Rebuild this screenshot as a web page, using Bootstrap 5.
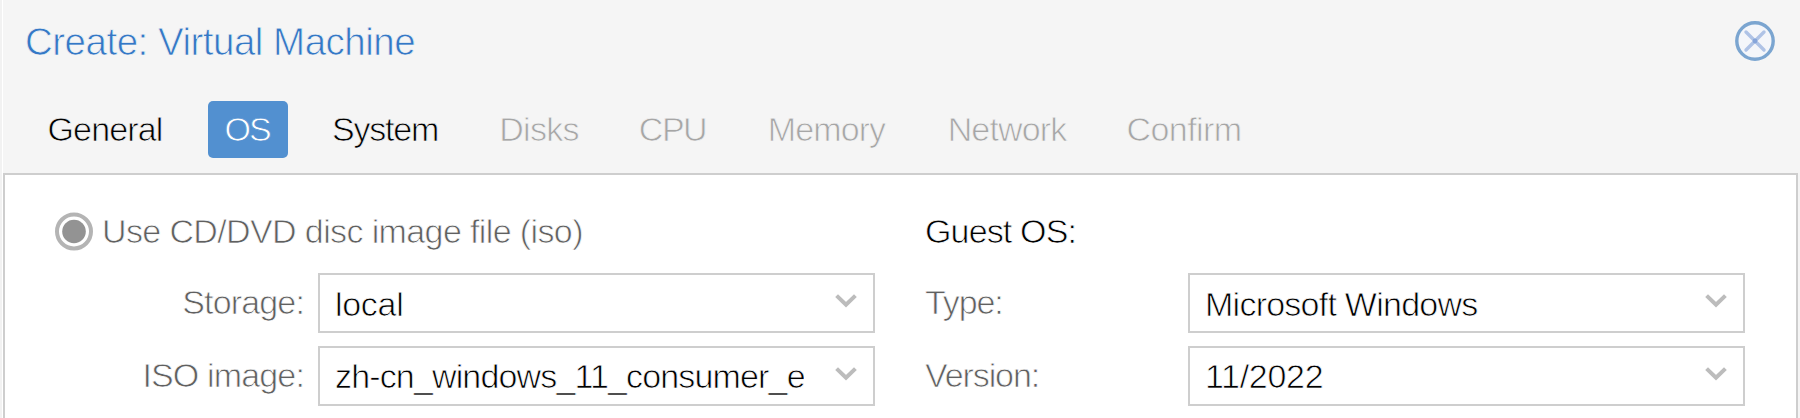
<!DOCTYPE html>
<html lang="en">
<head>
<meta charset="utf-8">
<title>Create: Virtual Machine</title>
<link href="https://cdn.jsdelivr.net/npm/bootstrap@5.3.0/dist/css/bootstrap.min.css" rel="stylesheet">
<style>
body{background:#f5f5f5;font-family:"Liberation Sans",Arial,sans-serif;font-size:34px;line-height:40px;color:#000;height:418px;overflow:hidden;white-space:nowrap;letter-spacing:-.85px}
.wizard{height:418px;border-left:2px solid #f2f2f2;box-shadow:inset 1px 0 #fff}
/* a stroke in the background colour slims the letters to a light weight */
.thin,.thin *{-webkit-text-stroke:.75px var(--behind,#fff)}
.thin svg{-webkit-text-stroke:0}
.wizard-head{height:82px;padding:0 25px 0 23px;--behind:#f5f5f5}
.wizard-title{font-size:38.5px;font-weight:400;line-height:46px;padding-top:2px;color:#3478c6;letter-spacing:-.5px}
.wizard-tabs{gap:26px;padding:19px 0 0 27px;height:91px;--behind:#f5f5f5}
.wizard-tabs .nav-link{height:57px;padding:8px 1px 0 0;text-align:center;color:#000;border-radius:5px}
.wizard-tabs .nav-link.disabled{color:#a6a6a6}
.wizard-tabs .nav-link.active{background:#5290d0;color:#fff;--behind:#5290d0}
.t1{width:153px}
.wizard-tabs .t2{width:80px;letter-spacing:-2px;padding-right:2px}
.t3{width:143px;letter-spacing:-1.2px}
.t4{width:113px;letter-spacing:-.7px}
.t5{width:102px;letter-spacing:-1.5px}
.t6{width:154px;letter-spacing:-.9px}
.t7{width:155px}
.t8{width:147px;letter-spacing:-.6px}
.pane{border:2px solid #cecece;border-bottom:0;background:#fff;height:245px;margin:0 2px 0 1px;padding:36px 51px 0 50px}
.lbl{color:#606060}
.left-side{width:820px}
.right-side{width:820px}
.line-top{height:62px}
.radio-text{margin-left:9px;letter-spacing:-.62px}
.combo{width:557px;height:60px;border:2px solid #cecece}
.line-field{height:73px}
.line-field .lbl{padding-top:9px}
.left-side .lbl-field{width:263px;padding-right:14px;text-align:right}
.right-side .lbl-field{width:263px}
.combo-value{margin:9px 0 0 15px;width:469px;height:42px;overflow:hidden}
.line-field + .line-field .combo-value{margin-top:8px}
.combo svg{margin:18px 16px 0 0}
.tight{letter-spacing:-1.1px}
.normal{letter-spacing:-.3px}
.value-os{letter-spacing:-.75px}
</style>
<script src="https://cdn.jsdelivr.net/npm/bootstrap@5.3.0/dist/js/bootstrap.bundle.min.js"></script>
</head>
<body>
<svg width="0" height="0" class="d-none"><symbol id="chev" viewBox="0 0 22 16"><path d="M1.6 2.6L11 11.8L20.4 2.6" fill="none" stroke="#bcbcbc" stroke-width="4"/></symbol></svg>
<div class="wizard">
<header class="wizard-head d-flex align-items-center justify-content-between thin">
<h1 class="wizard-title mb-0">Create: Virtual Machine</h1>
<svg width="40" height="40" viewBox="0 0 40 40" role="img" aria-label="Close"><circle cx="20" cy="20" r="18.2" fill="#f4f6fa" stroke="#7ba5d0" stroke-width="3.4"/><path d="M11 11L29 29M29 11L11 29" stroke="#afc3e6" stroke-width="3.4" stroke-linecap="round"/><circle cx="20" cy="20" r="2.4" fill="#86a5da"/></svg>
</header>
<nav class="nav wizard-tabs flex-nowrap thin">
<a class="nav-link t1">General</a>
<a class="nav-link active t2">OS</a>
<a class="nav-link t3">System</a>
<a class="nav-link disabled t4">Disks</a>
<a class="nav-link disabled t5">CPU</a>
<a class="nav-link disabled t6">Memory</a>
<a class="nav-link disabled t7">Network</a>
<a class="nav-link disabled t8">Confirm</a>
</nav>
<main class="pane d-flex justify-content-between thin">
<section class="left-side">
<div class="line-top d-flex align-items-start">
<svg width="38" height="38" viewBox="0 0 38 38" class="mt-0 align-self-start" overflow="visible"><g transform="translate(0 1.5)"><circle cx="19" cy="19" r="17" fill="#fff" stroke="#b4b4b4" stroke-width="4"/><circle cx="19" cy="19" r="11.8" fill="#939393"/></g></svg>
<div class="lbl radio-text">Use CD/DVD disc image file (iso)</div>
</div>
<div class="line-field d-flex"><div class="lbl lbl-field">Storage:</div><div class="combo d-flex justify-content-between"><div class="combo-value normal">local</div><svg width="22" height="16"><use href="#chev"/></svg></div></div>
<div class="line-field d-flex"><div class="lbl lbl-field">ISO image:</div><div class="combo d-flex justify-content-between"><div class="combo-value">zh-cn_windows_11_consumer_e</div><svg width="22" height="16"><use href="#chev"/></svg></div></div>
</section>
<section class="right-side">
<div class="line-top">Guest OS:</div>
<div class="line-field d-flex"><div class="lbl lbl-field tight">Type:</div><div class="combo d-flex justify-content-between"><div class="combo-value value-os">Microsoft Windows</div><svg width="22" height="16"><use href="#chev"/></svg></div></div>
<div class="line-field d-flex"><div class="lbl lbl-field tight">Version:</div><div class="combo d-flex justify-content-between"><div class="combo-value normal">11/2022</div><svg width="22" height="16"><use href="#chev"/></svg></div></div>
</section>
</main>
</div>
</body>
</html>
